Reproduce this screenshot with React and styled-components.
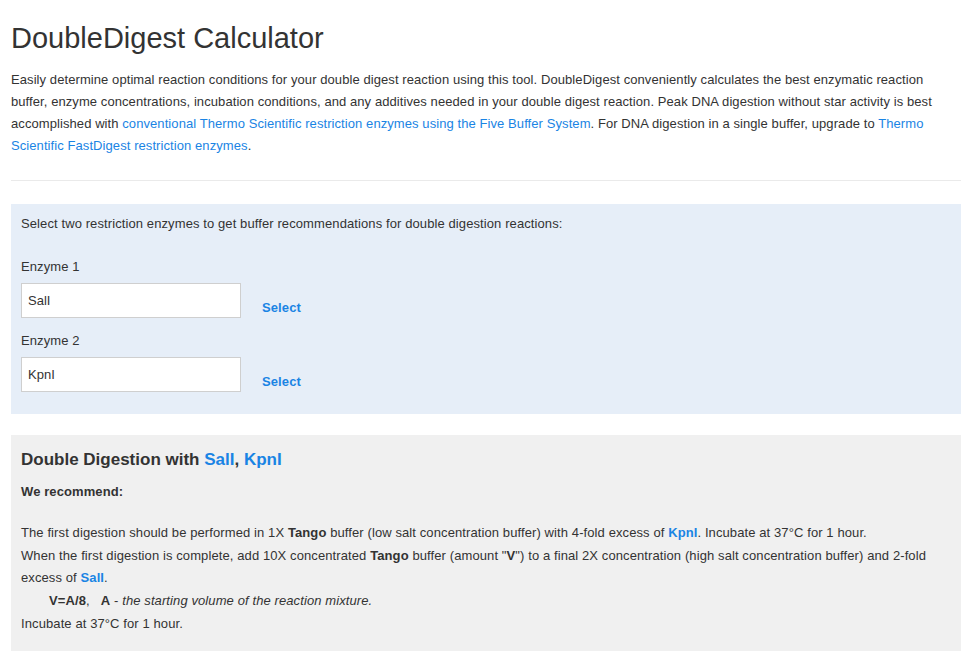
import React from "react";
import styled, { createGlobalStyle } from "styled-components";

const GlobalStyle = createGlobalStyle`
  body {
    margin: 0;
    background: #fff;
    font-family: "Liberation Sans", Arial, sans-serif;
    color: #333;
  }
`;

const Page = styled.div`
  padding: 0 10px 0 11px;
`;

const Title = styled.h1`
  margin: 22px 0 15px;
  font-size: 29px;
  line-height: 32px;
  font-weight: normal;
  color: #333;
`;

const Intro = styled.p`
  margin: 0;
  font-size: 13px;
  line-height: 22px;
  letter-spacing: 0.08px;
`;

const Link = styled.a`
  color: #1a84e4;
  text-decoration: none;
  font-weight: ${(p) => (p.$bold ? "bold" : "normal")};
`;

const Rule = styled.hr`
  margin: 23px 0 23px;
  border: 0;
  border-top: 1px solid #eaeaea;
`;

const Panel = styled.section`
  background: ${(p) => p.$bg};
  padding: ${(p) => p.$pad};
  font-size: 13px;
  letter-spacing: 0.1px;
  margin-bottom: 21px;
`;

const Lead = styled.div`
  line-height: 20px;
`;

const Label = styled.div`
  line-height: 20px;
  margin: ${(p) => (p.$first ? "23px" : "13px")} 0 6px;
`;

const FieldRow = styled.div`
  display: flex;
  align-items: flex-end;
  gap: 21px;
`;

const Input = styled.input`
  box-sizing: border-box;
  width: 220px;
  height: 35px;
  border: 1px solid #cfcfcf;
  background: #fff;
  padding: 0 6px;
  font-family: "Liberation Sans", Arial, sans-serif;
  font-size: 13px;
  color: #333;
  outline: none;
`;

const SelectLink = styled.a`
  color: #1a84e4;
  font-weight: bold;
  font-size: 13px;
  line-height: 20px;
  text-decoration: none;
  cursor: pointer;
`;

const Heading = styled.h2`
  margin: 0;
  font-size: 17px;
  line-height: 22px;
  font-weight: bold;
  letter-spacing: 0;
  color: #333;
`;

const Recommend = styled.div`
  margin: 11px 0 20px;
  font-weight: bold;
  line-height: 20px;
`;

const Line = styled.p`
  margin: 0;
  line-height: 22.7px;
  padding-left: ${(p) => (p.$indent ? "28px" : "0")};
`;

export default function App() {
  return (
    <Page>
      <GlobalStyle />
      <Title>DoubleDigest Calculator</Title>
      <Intro>
        Easily determine optimal reaction conditions for your double digest reaction using this tool.
        DoubleDigest conveniently calculates the best enzymatic reaction buffer, enzyme concentrations,
        incubation conditions, and any additives needed in your double digest reaction. Peak DNA
        digestion without star activity is best accomplished with{" "}
        <Link href="#">conventional Thermo Scientific restriction enzymes using the Five Buffer System</Link>.
        For DNA digestion in a single buffer, upgrade to{" "}
        <Link href="#">Thermo Scientific FastDigest restriction enzymes</Link>.
      </Intro>
      <Rule />
      <Panel $bg="#e6eef8" $pad="10px 10px 22px">
        <Lead>Select two restriction enzymes to get buffer recommendations for double digestion reactions:</Lead>
        <Label $first>Enzyme 1</Label>
        <FieldRow>
          <Input defaultValue="SalI" spellCheck={false} />
          <SelectLink>Select</SelectLink>
        </FieldRow>
        <Label>Enzyme 2</Label>
        <FieldRow>
          <Input defaultValue="KpnI" spellCheck={false} />
          <SelectLink>Select</SelectLink>
        </FieldRow>
      </Panel>
      <Panel $bg="#f0f0f0" $pad="14px 10px 20px">
        <Heading>
          Double Digestion with <Link $bold href="#">SalI</Link>, <Link $bold href="#">KpnI</Link>
        </Heading>
        <Recommend>We recommend:</Recommend>
        <Line>
          The first digestion should be performed in 1X <b>Tango</b> buffer (low salt concentration
          buffer) with 4-fold excess of <Link $bold href="#">KpnI</Link>. Incubate at 37°C for 1 hour.
        </Line>
        <Line>
          When the first digestion is complete, add 10X concentrated <b>Tango</b> buffer (amount "<b>V</b>")
          to a final 2X concentration (high salt concentration buffer) and 2-fold excess of{" "}
          <Link $bold href="#">SalI</Link>.
        </Line>
        <Line $indent>
          <b>V=A/8</b>,&nbsp;&nbsp; <b>A</b> - <i>the starting volume of the reaction mixture.</i>
        </Line>
        <Line>Incubate at 37°C for 1 hour.</Line>
      </Panel>
    </Page>
  );
}
